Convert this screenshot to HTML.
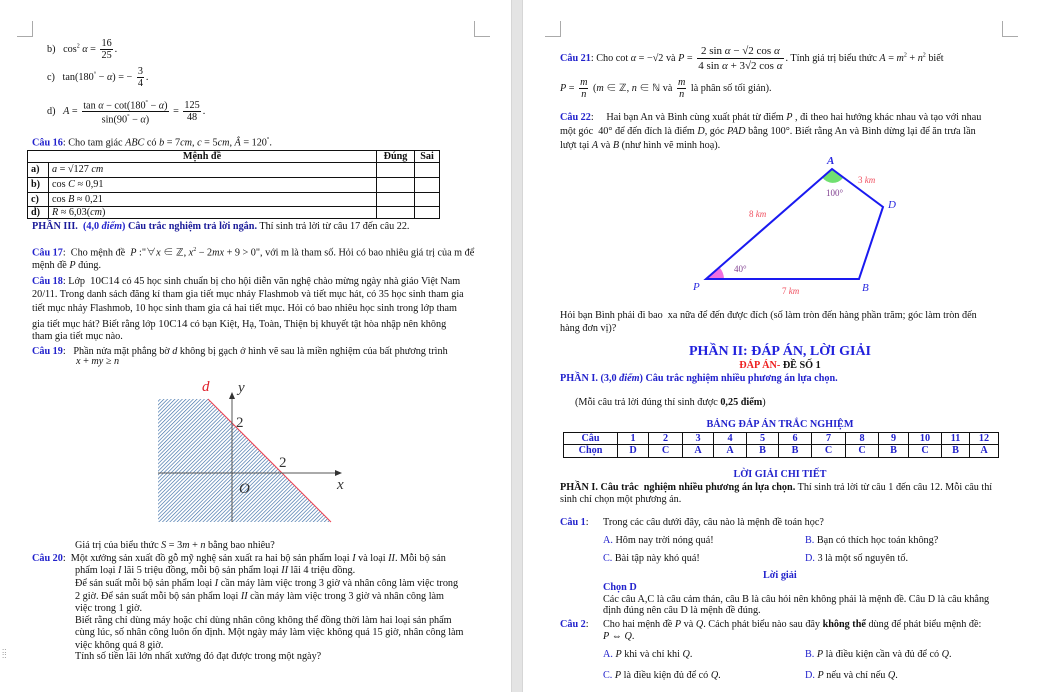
<!DOCTYPE html>
<html><head><meta charset="utf-8"><style>
*{margin:0;padding:0;box-sizing:border-box}
body{width:1040px;height:692px;overflow:hidden;background:#fff;font-family:"Liberation Serif","Noto Serif CJK SC",serif;font-size:10.2px;color:#111;position:relative}
.a{position:absolute;white-space:nowrap;line-height:12px}
.b{color:#2222cc;font-weight:bold}
.bl{color:#2222cc}
i{font-style:italic}
.fr{display:inline-block;vertical-align:middle;text-align:center;line-height:11px;margin:0 2px}
.fr span{display:block;padding:0 1px}
.fr span:first-child{border-bottom:1px solid #111}
table{border-collapse:collapse;position:absolute;table-layout:fixed}
td{border:1px solid #111;padding:0 3px;font-size:10.2px;line-height:10px;overflow:hidden;white-space:nowrap}
.gut{position:absolute;left:511px;top:0;width:12px;height:692px;background:#e4e4e4;border-left:1px solid #d6d6d6;border-right:1px solid #d6d6d6}
.cm{position:absolute;border-color:#aaa;border-style:solid;width:16px;height:16px}
</style></head><body>
<div class="gut"></div>
<div class="cm" style="left:17px;top:21px;border-width:0 1px 1px 0"></div>
<div class="cm" style="left:474px;top:21px;border-width:0 0 1px 1px"></div>
<div class="cm" style="left:545px;top:21px;border-width:0 1px 1px 0"></div>
<div class="cm" style="left:1002px;top:21px;border-width:0 0 1px 1px"></div>
<div class="a" style="left:2px;top:648px;color:#888;font-size:8px;line-height:5px">::<br>::</div>

<!-- LEFT PAGE -->
<div class="a" style="left:47px;top:38px">b)&nbsp;&nbsp; cos<sup style="font-size:6px">2</sup> <i>α</i> = <span class="fr"><span>16</span><span style="border:0">25</span></span>.</div>
<div class="a" style="left:47px;top:66px">c)&nbsp;&nbsp; tan(180<sup style="font-size:6px">°</sup> − <i>α</i>) = − <span class="fr"><span>3</span><span>4</span></span>.</div>
<div class="a" style="left:47px;top:98px">d)&nbsp;&nbsp; <i>A</i> = <span class="fr"><span>tan <i>α</i> − cot(180<sup style="font-size:6px">°</sup> − <i>α</i>)</span><span>sin(90<sup style="font-size:6px">°</sup> − <i>α</i>)</span></span> = <span class="fr"><span>125</span><span>48</span></span>.</div>
<div class="a" style="left:32px;top:134px"><span class="b">Câu 16</span>: Cho tam giác <i>ABC</i> có <i>b</i> = 7<i>cm</i>, <i>c</i> = 5<i>cm</i>, <i>Â</i> = 120<sup style="font-size:6px">°</sup>.</div>
<table style="left:27px;top:150px;width:413px">
<colgroup><col style="width:21px"><col style="width:328px"><col style="width:38px"><col></colgroup>
<tr style="height:12px"><td colspan="2" style="text-align:center;font-weight:bold">Mệnh đề</td><td style="font-weight:bold;text-align:center">Đúng</td><td style="font-weight:bold;text-align:center">Sai</td></tr>
<tr style="height:15px"><td style="font-weight:bold">a)</td><td><i>a</i> = √127 <i>cm</i></td><td></td><td></td></tr>
<tr style="height:15px"><td style="font-weight:bold">b)</td><td>cos <i>C</i> ≈ 0,91</td><td></td><td></td></tr>
<tr style="height:14px"><td style="font-weight:bold">c)</td><td>cos <i>B</i> ≈ 0,21</td><td></td><td></td></tr>
<tr style="height:12px"><td style="font-weight:bold">d)</td><td><i>R</i> ≈ 6,03(<i>cm</i>)</td><td></td><td></td></tr>
</table>
<div class="a" style="left:32px;top:221px"><b style="color:#1a1a99">PHẦN III. &nbsp;<span class="bl">(4,0 <i>điểm</i>)</span> Câu trắc nghiệm trả lời ngắn.</b> Thí sinh trả lời từ câu 17 đến câu 22.</div>
<div class="a" style="left:32px;top:244px"><span class="b">Câu 17</span>: &nbsp;Cho mệnh đề &nbsp;<i>P</i> :"∀<i>x</i> ∈ ℤ, <i>x</i><sup style="font-size:6px">2</sup> − 2<i>mx</i> + 9 &gt; 0", với m là tham số. Hỏi có bao nhiêu giá trị của m để</div>
<div class="a" style="left:32px;top:260px">mệnh đề <i>P</i> đúng.</div>
<div class="a" style="left:32px;top:275px"><span class="b">Câu 18</span>: Lớp &nbsp;<span style="font-size:11px">10C14</span> có 45 học sinh chuẩn bị cho hội diễn văn nghệ chào mừng ngày nhà giáo Việt Nam</div>
<div class="a" style="left:32px;top:289px">20/11. Trong danh sách đăng kí tham gia tiết mục nhảy Flashmob và tiết mục hát, có 35 học sinh tham gia</div>
<div class="a" style="left:32px;top:303px">tiết mục nhảy Flashmob, 10 học sinh tham gia cả hai tiết mục. Hỏi có bao nhiêu học sinh trong lớp tham</div>
<div class="a" style="left:32px;top:318px">gia tiết mục hát? Biết rằng lớp <span style="font-size:11px">10C14</span> có bạn Kiệt, Hạ, Toàn, Thiện bị khuyết tật hòa nhập nên không</div>
<div class="a" style="left:32px;top:331px">tham gia tiết mục nào.</div>
<div class="a" style="left:32px;top:346px"><span class="b">Câu 19</span>: &nbsp;&nbsp;Phần nửa mặt phẳng bờ <i>d</i> không bị gạch ở hình vẽ sau là miền nghiệm của bất phương trình</div>
<div class="a" style="left:76px;top:356px"><i>x</i> + <i>my</i> ≥ <i>n</i></div>

<svg style="position:absolute;left:150px;top:376px" width="210" height="152" viewBox="150 376 210 152">
<defs><pattern id="h" width="2.6" height="2.6" patternUnits="userSpaceOnUse" patternTransform="rotate(45)"><rect width="2.6" height="2.6" fill="#fff"/><line x1="0" y1="0" x2="0" y2="2.6" stroke="#3c6ea8" stroke-width="1.3"/></pattern></defs>
<polygon points="158,399 208,399 331,522 158,522" fill="url(#h)"/>
<line x1="208" y1="399" x2="331" y2="522" stroke="#f04050" stroke-width="1"/>
<line x1="158" y1="473" x2="340" y2="473" stroke="#555" stroke-width="1"/>
<polygon points="342,473 335,470 335,476" fill="#333"/>
<line x1="232" y1="522" x2="232" y2="395" stroke="#555" stroke-width="1"/>
<polygon points="232,392 229,399 235,399" fill="#333"/>
<text x="202" y="391" font-family="Liberation Serif" font-style="italic" font-size="15" fill="#e0202a">d</text>
<text x="238" y="392" font-family="Liberation Serif" font-style="italic" font-size="15" fill="#333">y</text>
<text x="236" y="427" font-family="Liberation Serif" font-size="15" fill="#333">2</text>
<text x="279" y="467" font-family="Liberation Serif" font-size="15" fill="#333">2</text>
<text x="239" y="493" font-family="Liberation Serif" font-style="italic" font-size="15" fill="#333">O</text>
<text x="337" y="489" font-family="Liberation Serif" font-style="italic" font-size="15" fill="#333">x</text>
</svg>

<div class="a" style="left:75px;top:540px">Giá trị của biểu thức <i>S</i> = 3<i>m</i> + <i>n</i> bằng bao nhiêu?</div>
<div class="a" style="left:32px;top:553px"><span class="b">Câu 20</span>: &nbsp;Một xưởng sản xuất đồ gỗ mỹ nghệ sản xuất ra hai bộ sản phẩm loại <i>I</i> và loại <i>II</i>. Mỗi bộ sản</div>
<div class="a" style="left:75px;top:565px">phẩm loại <i>I</i> lãi 5 triệu đồng, mỗi bộ sản phẩm loại <i>II</i> lãi 4 triệu đồng.</div>
<div class="a" style="left:75px;top:578px">Để sản suất mỗi bộ sản phẩm loại <i>I</i> cần máy làm việc trong 3 giờ và nhân công làm việc trong</div>
<div class="a" style="left:75px;top:591px">2 giờ. Để sản suất mỗi bộ sản phẩm loại <i>II</i> cần máy làm việc trong 3 giờ và nhân công làm</div>
<div class="a" style="left:75px;top:603px">việc trong 1 giờ.</div>
<div class="a" style="left:75px;top:615px">Biết rằng chỉ dùng máy hoặc chỉ dùng nhân công không thể đồng thời làm hai loại sản phẩm</div>
<div class="a" style="left:75px;top:627px">cùng lúc, số nhân công luôn ổn định. Một ngày máy làm việc không quá 15 giờ, nhân công làm</div>
<div class="a" style="left:75px;top:640px">việc không quá 8 giờ.</div>
<div class="a" style="left:75px;top:651px">Tính số tiền lãi lớn nhất xưởng đó đạt được trong một ngày?</div>

<!-- RIGHT PAGE -->
<div class="a" style="left:560px;top:44px"><span class="b">Câu 21</span>: Cho cot <i>α</i> = −√2 và <i>P</i> = <span class="fr" style="font-size:11px;line-height:14px"><span>2 sin <i>α</i> − √2 cos <i>α</i></span><span>4 sin <i>α</i> + 3√2 cos <i>α</i></span></span>. Tính giá trị biểu thức <i>A</i> = <i>m</i><sup style="font-size:6px">2</sup> + <i>n</i><sup style="font-size:6px">2</sup> biết</div>
<div class="a" style="left:560px;top:77px"><i>P</i> = <span class="fr"><span><i>m</i></span><span style="border:0"><i>n</i></span></span> (<i>m</i> ∈ ℤ, <i>n</i> ∈ ℕ và <span class="fr"><span><i>m</i></span><span style="border:0"><i>n</i></span></span> là phân số tối giản).</div>
<div class="a" style="left:560px;top:112px"><span class="b">Câu 22</span>: &nbsp;&nbsp;&nbsp;&nbsp;Hai bạn An và Bình cùng xuất phát từ điểm <i>P</i> , đi theo hai hướng khác nhau và tạo với nhau</div>
<div class="a" style="left:560px;top:126px">một góc &nbsp;40° để đến đích là điểm <i>D</i>, góc <i>PAD</i> bằng 100°. Biết rằng An và Bình dừng lại để ăn trưa lần</div>
<div class="a" style="left:560px;top:140px">lượt tại <i>A</i> và <i>B</i> (như hình vẽ minh hoạ).</div>

<svg style="position:absolute;left:680px;top:150px" width="240" height="150" viewBox="680 150 240 150">
<path d="M706,279 L720,268 A18,18 0 0 1 724,279 Z" fill="#f070e0"/>
<path d="M832,169 L822,177 A13,13 0 0 0 843,178 Z" fill="#70e070"/>
<polygon points="706,279 832,169 883,207 859,279" fill="none" stroke="#1a1af0" stroke-width="2"/>
<g font-family="Liberation Serif" font-size="10">
<text x="827" y="164" font-style="italic" font-weight="bold" fill="#2a2ae0" font-size="11">A</text>
<text x="888" y="208" font-style="italic" fill="#2a2ae0" font-size="11">D</text>
<text x="862" y="291" font-style="italic" fill="#2a2ae0" font-size="11">B</text>
<text x="693" y="290" font-style="italic" fill="#2a2ae0" font-size="11">P</text>
<text x="858" y="183" fill="#f05060" font-size="9">3 <tspan font-style="italic">km</tspan></text>
<text x="749" y="217" fill="#f05060" font-size="9">8 <tspan font-style="italic">km</tspan></text>
<text x="782" y="294" fill="#f05060" font-size="9">7 <tspan font-style="italic">km</tspan></text>
<text x="826" y="196" fill="#804090" font-size="9">100°</text>
<text x="734" y="272" fill="#804090" font-size="9">40°</text>
</g>
</svg>

<div class="a" style="left:560px;top:310px">Hỏi bạn Bình phải đi bao &nbsp;xa nữa để đến được đích (số làm tròn đến hàng phần trăm; góc làm tròn đến</div>
<div class="a" style="left:560px;top:323px">hàng đơn vị)?</div>
<div class="a" style="left:520px;top:344px;width:520px;text-align:center;color:#2222dd;font-weight:bold;font-size:14px;line-height:16px">PHẦN II: ĐÁP ÁN, LỜI GIẢI</div>
<div class="a" style="left:520px;top:360px;width:520px;text-align:center;font-weight:bold"><span style="color:#ee2020">ĐÁP ÁN-</span> ĐỀ SỐ 1</div>
<div class="a" style="left:560px;top:373px" ><b class="bl">PHẦN I. (3,0 <i>điểm</i>) Câu trắc nghiệm nhiều phương án lựa chọn.</b></div>
<div class="a" style="left:575px;top:397px">(Mỗi câu trả lời đúng thí sinh được <b>0,25 điểm</b>)</div>
<div class="a" style="left:520px;top:419px;width:520px;text-align:center"><b class="bl">BẢNG ĐÁP ÁN TRẮC NGHIỆM</b></div>
<table style="left:563px;top:432px;width:436px;color:#2222cc;font-weight:bold;text-align:center">
<colgroup><col style="width:54px"><col style="width:31px"><col style="width:34px"><col style="width:31px"><col style="width:33px"><col style="width:32px"><col style="width:33px"><col style="width:34px"><col style="width:33px"><col style="width:30px"><col style="width:33px"><col style="width:28px"><col></colgroup>
<tr style="height:12px"><td>Câu</td><td>1</td><td>2</td><td>3</td><td>4</td><td>5</td><td>6</td><td>7</td><td>8</td><td>9</td><td>10</td><td>11</td><td>12</td></tr>
<tr style="height:13px"><td>Chọn</td><td>D</td><td>C</td><td>A</td><td>A</td><td>B</td><td>B</td><td>C</td><td>C</td><td>B</td><td>C</td><td>B</td><td>A</td></tr>
</table>
<div class="a" style="left:520px;top:469px;width:520px;text-align:center"><b class="bl">LỜI GIẢI CHI TIẾT</b></div>
<div class="a" style="left:560px;top:482px"><b>PHẦN I. Câu trắc &nbsp;nghiệm nhiều phương án lựa chọn.</b> Thí sinh trả lời từ câu 1 đến câu 12. Mỗi câu thí</div>
<div class="a" style="left:560px;top:494px">sinh chỉ chọn một phương án.</div>
<div class="a" style="left:560px;top:517px"><span class="b">Câu 1</span>:</div>
<div class="a" style="left:603px;top:517px">Trong các câu dưới đây, câu nào là mệnh đề toán học?</div>
<div class="a" style="left:603px;top:535px"><span class="bl">A.</span> Hôm nay trời nóng quá!</div>
<div class="a" style="left:805px;top:535px"><span class="bl">B.</span> Bạn có thích học toán không?</div>
<div class="a" style="left:603px;top:553px"><span class="bl">C.</span> Bài tập này khó quá!</div>
<div class="a" style="left:805px;top:553px"><span class="bl">D.</span> 3 là một số nguyên tố.</div>
<div class="a" style="left:763px;top:570px"><b class="bl">Lời giải</b></div>
<div class="a" style="left:603px;top:582px"><b class="bl">Chọn D</b></div>
<div class="a" style="left:603px;top:594px">Các câu A,C là câu cảm thán, câu B là câu hỏi nên không phải là mệnh đề. Câu D là câu khẳng</div>
<div class="a" style="left:603px;top:605px">định đúng nên câu D là mệnh đề đúng.</div>
<div class="a" style="left:560px;top:619px"><span class="b">Câu 2</span>:</div>
<div class="a" style="left:603px;top:619px">Cho hai mệnh đề <i>P</i> và <i>Q</i>. Cách phát biểu nào sau đây <b>không thể</b> dùng để phát biểu mệnh đề:</div>
<div class="a" style="left:603px;top:631px"><i>P</i> ⇔ <i>Q</i>.</div>
<div class="a" style="left:603px;top:649px"><span class="bl">A.</span> <i>P</i> khi và chỉ khi <i>Q</i>.</div>
<div class="a" style="left:805px;top:649px"><span class="bl">B.</span> <i>P</i> là điều kiện cần và đủ để có <i>Q</i>.</div>
<div class="a" style="left:603px;top:670px"><span class="bl">C.</span> <i>P</i> là điều kiện đủ để có <i>Q</i>.</div>
<div class="a" style="left:805px;top:670px"><span class="bl">D.</span> <i>P</i> nếu và chỉ nếu <i>Q</i>.</div>
</body></html>
